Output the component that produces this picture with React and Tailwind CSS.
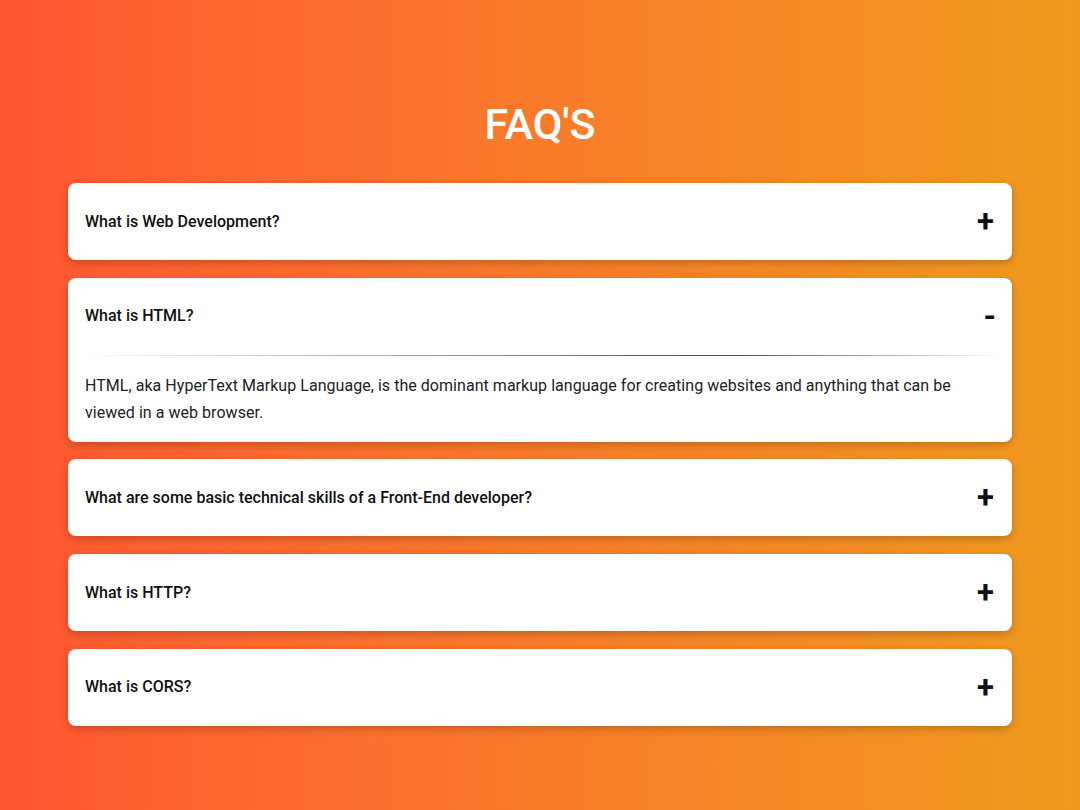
import React, { useState } from 'react';

const faqs = [
  {
    q: 'What is Web Development?',
    a: 'Web development is the work involved in developing a website for the Internet or an intranet.',
  },
  {
    q: 'What is HTML?',
    a: 'HTML, aka HyperText Markup Language, is the dominant markup language for creating websites and anything that can be viewed in a web browser.',
  },
  {
    q: 'What are some basic technical skills of a Front-End developer?',
    a: 'HTML, CSS, JavaScript, responsive design, version control and a good eye for detail.',
  },
  {
    q: 'What is HTTP?',
    a: 'HTTP is the protocol used to transfer data over the web.',
  },
  {
    q: 'What is CORS?',
    a: 'Cross-Origin Resource Sharing lets a server say which other origins may load its resources.',
  },
];

const FaqItem = ({ item, open, onToggle }) => (
  <div className="bg-white rounded-lg shadow-[0_3px_8px_rgba(0,0,0,0.22)]">
    <button
      onClick={onToggle}
      className="w-full h-[77px] flex items-center justify-between pl-[17px] pr-[17px] text-left cursor-pointer"
    >
      <span className="text-[16px] font-medium text-[#111]">{item.q}</span>
      {open ? (
        <span className="text-[32px] font-bold text-[#111] leading-none -mr-[1px]">-</span>
      ) : (
        <span className="text-[31px] font-bold text-[#111] leading-none mr-[1px]">+</span>
      )}
    </button>
    {open && (
      <>
        <div className="h-px mx-[6px] bg-gradient-to-r from-transparent via-[#3f4f5e] via-70% to-transparent" />
        <p className="px-[17px] pt-4 pb-4 text-[16px] leading-[27px] tracking-[0.04px] text-[#222]">{item.a}</p>
      </>
    )}
  </div>
);

export default function App() {
  const [openIdx, setOpenIdx] = useState(1);

  return (
    <div
      className="min-h-[810px] w-full bg-gradient-to-r from-[#ff5531] to-[#f09a1d] pt-[100px] pb-10"
      style={{ fontFamily: 'Roboto, "Liberation Sans", sans-serif' }}
    >
      <h1 className="text-center text-white text-[43px] leading-[48px] font-medium mb-[35px]">FAQ'S</h1>
      <div className="w-[944px] mx-auto flex flex-col gap-[17.7px]">
        {faqs.map((item, i) => (
          <FaqItem
            key={item.q}
            item={item}
            open={openIdx === i}
            onToggle={() => setOpenIdx(openIdx === i ? -1 : i)}
          />
        ))}
      </div>
    </div>
  );
}
